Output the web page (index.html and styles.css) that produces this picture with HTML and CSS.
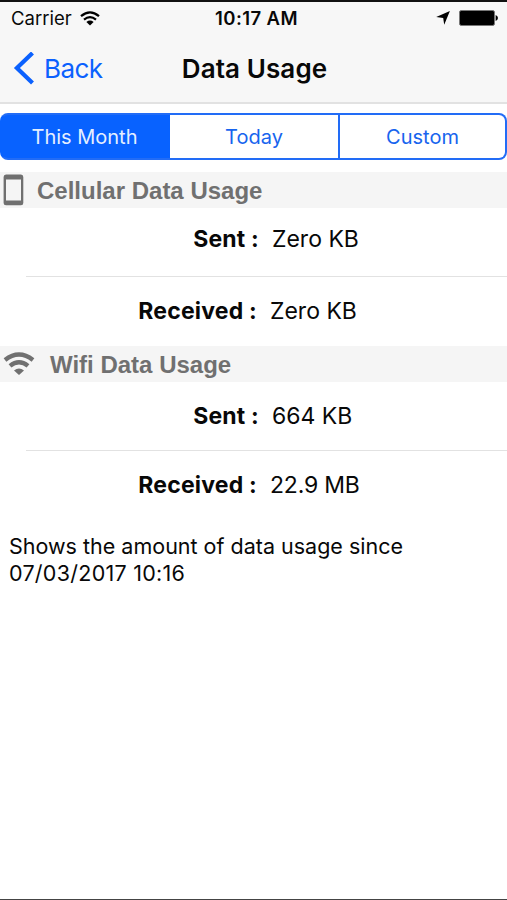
FILE: index.html
```html
<!DOCTYPE html>
<html lang="en">
<head>
<meta charset="utf-8">
<title>Data Usage</title>
<link rel="stylesheet" href="styles.css">
</head>
<body>
<div class="screen">
  <header class="top">
    <div class="status">
      <div class="carrier">
        <span class="carrier-name">Carrier</span>
        <svg class="status-wifi" viewBox="0 0 20 15" width="20" height="15"><path d="M1 5.2Q10-2.6 19 5.2M4 8.7Q10 3.7 16 8.7" fill="none" stroke="#000" stroke-width="2.2"/><path d="M6.4 11Q10 8.2 13.6 11L10 14.4Z"/></svg>
      </div>
      <span class="clock">10:17 AM</span>
      <div class="power">
        <svg viewBox="0 0 14 14" width="14" height="14"><path d="M13.9.1 8.2 13.8 7.2 6.9.2 6.1Z"/></svg>
        <svg viewBox="0 0 40 16" width="40" height="16"><rect x=".5" y=".5" width="35" height="15" rx="1.8" fill="#000" stroke="#777"/><path d="M36.6 5Q39 5.8 39 8T36.6 11Z"/></svg>
      </div>
    </div>
    <nav class="nav">
      <a class="back"><svg viewBox="0 0 22 34" width="22" height="34"><path d="M19.5 1 3.9 16 19.5 31" fill="none" stroke="#0b61fe" stroke-width="4.2"/></svg><span class="back-label">Back</span></a>
      <h1 class="title">Data Usage</h1>
      <span></span>
    </nav>
  </header>
  <div class="segments">
    <span class="segment active">This Month</span>
    <span class="segment">Today</span>
    <span class="segment">Custom</span>
  </div>
  <h2 class="section cellular"><svg viewBox="0 0 21 32" width="21" height="32"><path fill-rule="evenodd" d="M3 .5H18Q20.3.5 20.3 3V29Q20.3 31.3 18 31.3H3Q.6 31.3.6 29V3Q.6.5 3 .5ZM3 5.5V26.5H18V5.5Z" fill="#707070"/></svg><span class="section-label">Cellular Data Usage</span></h2>
  <div class="row row-a"><b class="key">Sent :</b><span class="value zero">Zero KB</span></div>
  <div class="row row-b"><b class="key received">Received :</b><span class="value zero">Zero KB</span></div>
  <h2 class="section wifi"><svg viewBox="0 0 32 24" width="32" height="24"><path d="M2 7.9Q16-3 30 7.9M7 13.9Q16 6.6 25 13.9" fill="none" stroke="#707070" stroke-width="4.4"/><path d="M11 18.4Q16 14.8 21 18.4L16 23Z" fill="#707070"/></svg><span class="section-label">Wifi Data Usage</span></h2>
  <div class="row row-c"><b class="key">Sent :</b><span class="value sent-size">664 KB</span></div>
  <div class="row row-d"><b class="key received">Received :</b><span class="value received-size">22.9 MB</span></div>
  <p class="note">Shows the amount of data usage since<br><span class="since">07/03/2017 10:16</span></p>
</div>
</body>
</html>
```
FILE: styles.css
```css
* { box-sizing: border-box; }
body { margin: 0; background: #fff; color: #080808; font-family: Inter, "Liberation Sans", sans-serif; }
svg { display: block; flex: none; }
h1, h2, p { margin: 0; }
.screen { height: 900px; overflow: hidden; border-top: 2px solid #111; border-bottom: 1px solid #444; }
.top { height: 102px; background: #f7f7f7; border-bottom: 2px solid #e2e2e2; }
.status { display: grid; grid-template-columns: 1fr auto 1fr; height: 32px; align-items: center; padding: 0 8px 0 11px; white-space: nowrap; }
.carrier { display: flex; align-items: center; gap: 8px; }
.carrier-name { font-size: 18.5px; }
.clock { font-size: 18.5px; font-weight: 600; letter-spacing: .4px; padding-left: 3px; }
.power { display: flex; justify-content: flex-end; align-items: center; gap: 9px; }
.nav { display: grid; grid-template-columns: 1fr auto 1fr; height: 68px; align-items: center; padding-top: 1px; }
.back { display: flex; align-items: center; padding-left: 13px; gap: 9px; color: #0b61fe; }
.back-label { font-size: 26px; letter-spacing: -.6px; }
.title { font-size: 26px; font-weight: 600; letter-spacing: .1px; padding-left: 2px; }
.segments { display: grid; grid-template-columns: 168px 168px 1fr; height: 47px; margin-top: 9px; border: 2px solid #226cf6; border-left-color: #0862ff; border-radius: 8px; overflow: hidden; background: linear-gradient(90deg, #0862ff 168px, #fff 168px); }
.segment { display: flex; align-items: center; justify-content: center; font-size: 20px; color: #1764ee; }
.segment + .segment + .segment { border-left: 2px solid #226cf6; }
.segment.active { color: #e4efff; padding-right: 3px; }
.section { display: flex; align-items: center; height: 36px; background: #f5f5f5; color: #707070; font: bold 24px/36px "Liberation Sans", sans-serif; }
.section-label { padding-top: 1px; }
.cellular { margin-top: 12px; padding-left: 3px; gap: 13px; }
.wifi { padding-left: 3px; gap: 15px; }
.row { display: grid; grid-template-columns: 259px 1fr; align-items: center; font-size: 23px; }
.key { font-weight: 700; justify-self: end; letter-spacing: .2px; }
.value { padding-left: 13px; justify-self: start; }
.row-a { height: 68px; padding-bottom: 7px; }
.row-b { height: 70px; padding-bottom: 1px; }
.row-c { height: 68px; padding-bottom: 1px; }
.row-d { height: 70px; padding-bottom: 1px; }
.row-b, .row-d { margin-left: 26px; border-top: 1px solid #e2e2e2; grid-template-columns: 231px 1fr; }
.received-size { letter-spacing: -.2px; }
.note { padding: 13px 9px; font-size: 21.5px; line-height: 27px; white-space: nowrap; }
.since { letter-spacing: .27px; }
```
